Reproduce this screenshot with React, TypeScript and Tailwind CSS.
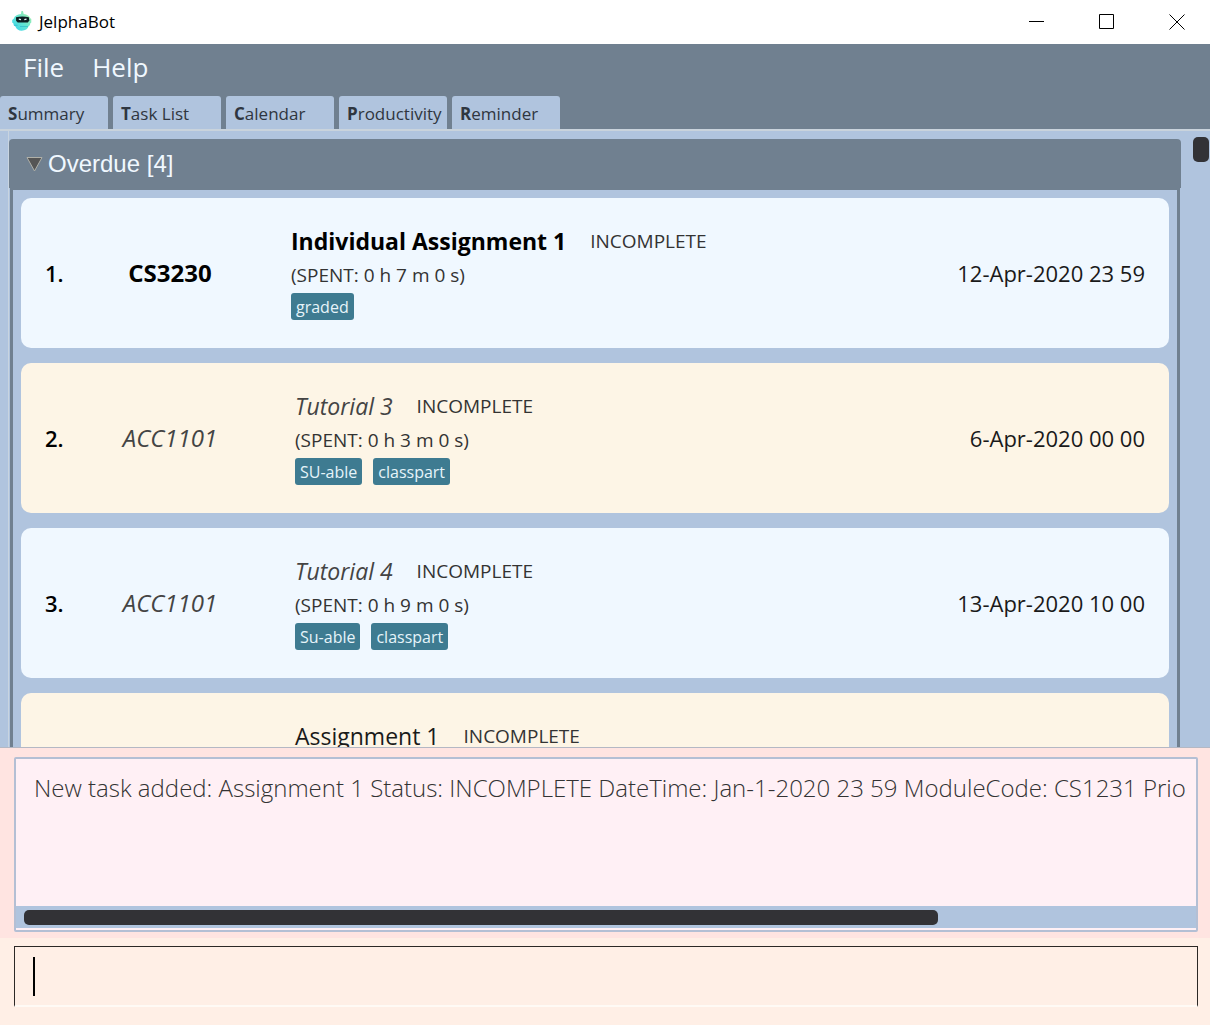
type Kind = "high" | "normal" | "low";

interface Task {
  index: number;
  module?: string;
  title: string;
  kind: Kind;
  status: string;
  spent?: string;
  tags: string[];
  due?: string;
}

const tasks: Task[] = [
  { index: 1, module: "CS3230", title: "Individual Assignment 1", kind: "high", status: "INCOMPLETE", spent: "(SPENT: 0 h 7 m 0 s)", tags: ["graded"], due: "12-Apr-2020 23 59" },
  { index: 2, module: "ACC1101", title: "Tutorial 3", kind: "low", status: "INCOMPLETE", spent: "(SPENT: 0 h 3 m 0 s)", tags: ["SU-able", "classpart"], due: "6-Apr-2020 00 00" },
  { index: 3, module: "ACC1101", title: "Tutorial 4", kind: "low", status: "INCOMPLETE", spent: "(SPENT: 0 h 9 m 0 s)", tags: ["Su-able", "classpart"], due: "13-Apr-2020 10 00" },
  { index: 4, title: "Assignment 1", kind: "normal", status: "INCOMPLETE", tags: [] },
];

const tabs = ["Summary", "Task List", "Calendar", "Productivity", "Reminder"];

const kindText: Record<Kind, string> = {
  high: "font-bold text-black",
  normal: "text-[#1a1a1a]",
  low: "italic text-[#444]",
};

function RobotIcon() {
  return (
    <svg className="h-6 w-5" viewBox="0 0 20 24" aria-hidden="true">
      <defs>
        <linearGradient id="head" x1="0" y1="1" x2="1" y2="0">
          <stop offset="0" stopColor="#3ad3f2" />
          <stop offset="0.5" stopColor="#63e6cf" />
          <stop offset="1" stopColor="#b9efa4" />
        </linearGradient>
      </defs>
      <path d="M9.500 1h1.400l.8 3c3.400.5 5.900 2 6.600 4.200l1 .7v3.600l-1 .7-.4 2-1.200.8c-.9 2.900-3.300 4.700-7 4.700-3.200 0-5.400-1.500-6.300-4.200L1.700 15.300l-.3-1.800-1.200-1V9.900l1.500-1.100C2.600 5.800 5.300 4.300 8.900 4z" fill="url(#head)" />
      <path d="M4 7.200c4-1 8.600-1 12.800 0l.5 3.400-1.500 1.800H5.700l-1.600-1.700z" fill="#0d1f22" />
      <path d="M6.800 9.200l2.200.4M12.300 9.600l2.200-.4" stroke="#e8fff8" strokeWidth="1.200" />
      <path d="M2 15.300h3.500M8 16.500h8" stroke="#2fb9c9" strokeWidth="0.700" />
    </svg>
  );
}

function TitleBar() {
  return (
    <header className="flex h-11 shrink-0 items-center bg-white pl-3">
      <RobotIcon />
      <h1 className="ml-[7px] flex-1 text-[17px] text-black">JelphaBot</h1>
      <div className="flex">
        <button aria-label="Minimize" className="flex h-11 w-[70px] items-center justify-center pl-1">
          <svg width="16" height="16" viewBox="0 0 16 16" stroke="#000" fill="none"><path d="M0 7.500h15" /></svg>
        </button>
        <button aria-label="Maximize" className="flex h-11 w-[70px] items-center justify-center pl-1">
          <svg width="16" height="16" viewBox="0 0 16 16" stroke="#000" fill="none"><path d="M.5.5h14v14H.5z" /></svg>
        </button>
        <button aria-label="Close" className="flex h-11 w-[70px] items-center justify-center pl-1">
          <svg width="16" height="16" viewBox="0 0 16 16" stroke="#000" fill="none"><path d="M.5.5l15 15M15.500.5l-15 15" /></svg>
        </button>
      </div>
    </header>
  );
}

function TaskCard({ task }: { task: Task }) {
  return (
    <li className={`flex h-[150px] shrink-0 rounded-[10px] px-6 ${task.index % 2 ? "bg-[#f0f8ff]" : "bg-[#fdf5e6]"}`}>
      <span className="w-[71px] self-center text-[22px] font-semibold text-black">{task.index}.</span>
      <span className={`w-[108px] self-center text-center text-[24px] ${kindText[task.kind]}`}>{task.module}</span>
      <div className={`flex-1 pt-[27px] ${task.kind === "high" ? "pl-[67px]" : "pl-[71px]"}`}>
        <div className="flex h-8 items-center gap-6">
          <h3 className={`text-[23px] ${kindText[task.kind]}`}>{task.title}</h3>
          <span className="text-[19px] text-[#333]">{task.status}</span>
        </div>
        <p className="flex h-9 items-center text-[19px] text-[#333]">{task.spent}</p>
        <div className="flex gap-[11px]">
          {task.tags.map((tag) => (
            <span key={tag} className="flex h-[27px] items-center rounded-[3px] bg-[#3e7b91] px-[5px] text-[16px] text-[#e6f4fa]">{tag}</span>
          ))}
        </div>
      </div>
      <time className="self-center text-[22px] text-[#1a1a1a]">{task.due}</time>
    </li>
  );
}

export default function App() {
  return (
    <div className="flex h-screen flex-col overflow-hidden bg-[#ffefe6] font-['Open_Sans','Noto_Sans',sans-serif]">
      <TitleBar />
      <nav className="shrink-0 bg-[#708090]">
        <div className="flex h-[52px] items-center gap-7 pb-[6px] pl-[23px] text-[26px] text-[#f0f8ff]">
          <button>File</button>
          <button>Help</button>
        </div>
        <div className="flex gap-[5px]" role="tablist">
          {tabs.map((tab, i) => (
            <button key={tab} role="tab" aria-selected={i === 0} className="h-[33px] w-[108px] rounded-t-[3px] bg-[#b0c4de] pt-[2px] pl-2 text-left text-[17px] whitespace-nowrap text-[#2f3640]">
              <b>{tab[0]}</b>{tab.slice(1)}
            </button>
          ))}
        </div>
      </nav>

      <main className="flex min-h-0 flex-1 overflow-hidden border-t-2 border-b border-t-[#c9d3dc] border-b-[#b4b8c4] bg-[#b0c4de] pl-2">
        <section className="min-w-0 flex-1 border-l border-[#c8d4e0] pt-2">
          <h2 className="rounded-t-[4px] bg-[#708090]">
            <button className="flex h-[49px] w-full items-center gap-[5px] pl-[17px] font-['Liberation_Sans',sans-serif] text-[24px] text-[#f0f8ff]">
              <svg width="17" height="16" viewBox="0 0 17 16" aria-hidden="true">
                <path d="M1 1.500h15L8.500 15z" fill="#555" stroke="#b0b0a8" />
              </svg>
              Overdue [4]
            </button>
          </h2>
          <ul className="mx-px flex flex-col gap-[15px] border-x-[3px] border-t-2 border-[#708090] px-2 pt-2">
            {tasks.map((task) => <TaskCard key={task.index} task={task} />)}
          </ul>
        </section>
        <div className="ml-3 w-[17px] pt-[6px]">
          <div className="h-[25px] w-4 rounded-[5px] bg-[#323236]" />
        </div>
      </main>

      <section className="shrink-0 bg-[#ffe4e1] px-3 pt-[9px] pb-[6px] pl-[14px]">
        <div className="flex h-[175px] flex-col rounded-[2px] border-2 border-[#b4bfd4] bg-[#fff0f5] pb-[2px]">
          <textarea
            readOnly
            wrap="off"
            aria-label="Result"
            className="min-h-0 flex-1 resize-none overflow-hidden pt-[11px] pl-[18px] text-[24px] leading-[36px] font-light text-[#333] outline-none"
            defaultValue="New task added: Assignment 1 Status: INCOMPLETE DateTime: Jan-1-2020 23 59 ModuleCode: CS1231 Prio"
          />
          <div className="flex h-[22px] items-center bg-[#b0c4de] pl-2">
            <div className="h-[15px] w-[78%] rounded-[5px] bg-[#323236]" />
          </div>
        </div>
      </section>

      <section className="shrink-0 px-3 pt-2 pb-[18px] pl-[14px]">
        <div className="flex h-[61px] items-center border border-[#2c2826] border-b-2 border-b-[#fffaf5] pl-[18px]">
          <span className="h-[39px] w-[2px] bg-black" />
          <input aria-label="Command" className="h-full min-w-0 flex-1 bg-transparent text-[24px] font-light caret-transparent outline-none" />
        </div>
      </section>
    </div>
  );
}
